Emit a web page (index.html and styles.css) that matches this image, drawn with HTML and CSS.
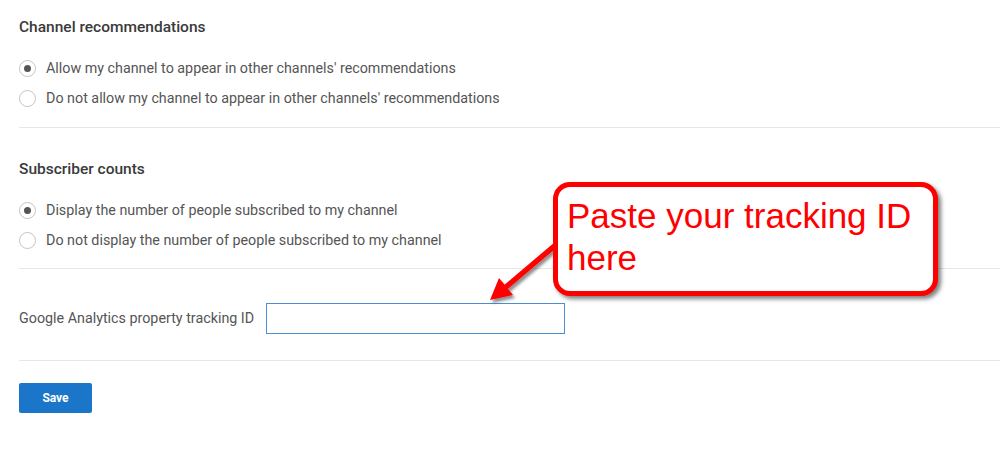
FILE: index.html
```html
<!DOCTYPE html>
<html>
<head>
<meta charset="utf-8">
<link rel="stylesheet" href="styles.css">
</head>
<body>
<div class="page">
  <section class="section first">
    <h2 class="heading">Channel recommendations</h2>
    <div class="options">
      <label class="option"><span class="radio checked"></span><span>Allow my channel to appear in other channels' recommendations</span></label>
      <label class="option"><span class="radio"></span><span>Do not allow my channel to appear in other channels' recommendations</span></label>
    </div>
  </section>
  <section class="section second">
    <h2 class="heading">Subscriber counts</h2>
    <div class="options">
      <label class="option"><span class="radio checked"></span><span>Display the number of people subscribed to my channel</span></label>
      <label class="option"><span class="radio"></span><span>Do not display the number of people subscribed to my channel</span></label>
    </div>
  </section>
  <section class="section third">
    <div class="field">
      <span class="field-label">Google Analytics property tracking ID</span>
      <span class="field-input"></span>
    </div>
  </section>
  <div class="actions">
    <button class="save">Save</button>
  </div>
</div>

<svg class="arrow" width="90" height="80" viewBox="0 0 90 80">
  <defs>
    <filter id="sh" x="-20%" y="-20%" width="150%" height="150%">
      <feDropShadow dx="2" dy="3" stdDeviation="1.5" flood-color="#000" flood-opacity="0.45"/>
    </filter>
  </defs>
  <g filter="url(#sh)">
    <line x1="26" y1="52" x2="78" y2="8" stroke="#ff0000" stroke-width="5.5"/>
    <polygon points="10,65 33,60 19,43" fill="#ff0000"/>
  </g>
</svg>

<div class="callout">Paste your tracking ID<br>here</div>
</body>
</html>
```

FILE: styles.css
```css
html, body {
  margin: 0;
  padding: 0;
  background: #ffffff;
}

body {
  font-family: Roboto, "Liberation Sans", sans-serif;
  position: relative;
  width: 1000px;
  height: 450px;
  overflow: hidden;
}

.page {
  margin-left: 19px;
}

.section {
  border-bottom: 1px solid #e6e6e6;
}

.section.first {
  padding: 17px 0 14px;
}

.section.second {
  padding: 31px 0 13px;
}

.section.third {
  padding: 34px 0 27px;
}

.heading {
  margin: 0 0 16px;
  font-size: 15.5px;
  font-weight: 500;
  line-height: 20px;
  color: #3a3a3a;
}

.options {
  display: flex;
  flex-direction: column;
}

.option {
  display: flex;
  align-items: center;
  height: 30px;
  font-size: 14.3px;
  color: #555555;
}

.radio {
  box-sizing: border-box;
  width: 17px;
  height: 17px;
  margin-right: 10px;
  border: 1px solid #c4c4c4;
  border-radius: 50%;
  display: flex;
  align-items: center;
  justify-content: center;
  flex: none;
}

.radio.checked::after {
  content: "";
  width: 7px;
  height: 7px;
  border-radius: 50%;
  background: #555555;
}

.field {
  display: flex;
  align-items: center;
  height: 30px;
}

.field-label {
  font-size: 14.3px;
  color: #555555;
  margin-right: 12px;
}

.field-input {
  box-sizing: border-box;
  width: 299px;
  height: 31px;
  border: 1px solid #4a8fd1;
  background: #fff;
}

.actions {
  padding-top: 22px;
}

.save {
  width: 73px;
  height: 30px;
  border: none;
  border-radius: 2px;
  background: #1b76c9;
  color: #ffffff;
  font-family: Roboto, "Liberation Sans", sans-serif;
  font-weight: 700;
  font-size: 12px;
  padding: 0;
}

.arrow {
  position: absolute;
  left: 480px;
  top: 235px;
}

.callout {
  position: absolute;
  left: 553px;
  top: 182px;
  width: 366px;
  height: 96px;
  padding: 8px 0 0 9px;
  border: 5px solid #ff0000;
  border-radius: 17px;
  background: #ffffff;
  box-shadow: 3px 3px 4px rgba(0, 0, 0, 0.5);
  font-family: "Liberation Sans", Arial, sans-serif;
  font-size: 35px;
  line-height: 42px;
  color: #ff0000;
}
```
